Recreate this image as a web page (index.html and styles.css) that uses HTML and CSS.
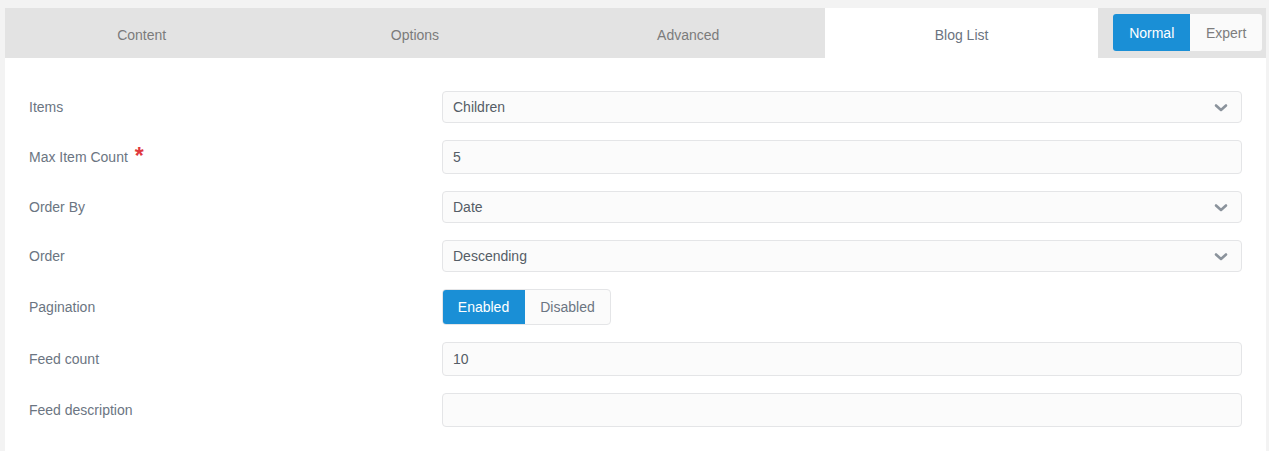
FILE: index.html
```html
<!DOCTYPE html>
<html>
<head>
<meta charset="utf-8">
<link rel="stylesheet" href="styles.css">
</head>
<body>
<div class="panel">
  <div class="tabbar">
    <div class="tab">Content</div>
    <div class="tab">Options</div>
    <div class="tab">Advanced</div>
    <div class="tab active">Blog List</div>
    <div class="mode">
      <div class="seg">
        <span class="seg-btn on">Normal</span>
        <span class="seg-btn">Expert</span>
      </div>
    </div>
  </div>
  <div class="form">
    <div class="row">
      <div class="label">Items</div>
      <div class="control select h32"><span>Children</span><svg class="chev" width="14" height="10" viewBox="0 0 14 10"><path d="M2 2.5 L7 7 L12 2.5" fill="none" stroke="#8b939c" stroke-width="2.6" stroke-linecap="round" stroke-linejoin="round"/></svg></div>
    </div>
    <div class="row">
      <div class="label">Max Item Count <span class="req">*</span></div>
      <div class="control input h34"><span>5</span></div>
    </div>
    <div class="row">
      <div class="label">Order By</div>
      <div class="control select h32"><span>Date</span><svg class="chev" width="14" height="10" viewBox="0 0 14 10"><path d="M2 2.5 L7 7 L12 2.5" fill="none" stroke="#8b939c" stroke-width="2.6" stroke-linecap="round" stroke-linejoin="round"/></svg></div>
    </div>
    <div class="row">
      <div class="label">Order</div>
      <div class="control select h32"><span>Descending</span><svg class="chev" width="14" height="10" viewBox="0 0 14 10"><path d="M2 2.5 L7 7 L12 2.5" fill="none" stroke="#8b939c" stroke-width="2.6" stroke-linecap="round" stroke-linejoin="round"/></svg></div>
    </div>
    <div class="row">
      <div class="label">Pagination</div>
      <div class="toggle">
        <span class="tg on">Enabled</span>
        <span class="tg">Disabled</span>
      </div>
    </div>
    <div class="row">
      <div class="label">Feed count</div>
      <div class="control input h34"><span>10</span></div>
    </div>
    <div class="row">
      <div class="label">Feed description</div>
      <div class="control input h34"><span></span></div>
    </div>
  </div>
</div>
</body>
</html>
```
FILE: styles.css
```css
html, body {
  margin: 0;
  padding: 0;
  background: #f3f3f3;
  font-family: "Liberation Sans", Arial, Helvetica, sans-serif;
  font-size: 14px;
}
.panel {
  margin: 8px 3px 0 5px;
  background: #ffffff;
  height: 443px;
  box-sizing: border-box;
}
.tabbar {
  display: flex;
  height: 50px;
  background: #e3e3e3;
}
.tab {
  width: 273.3px;
  display: flex;
  align-items: center;
  justify-content: center;
  color: #7b7b7b;
  font-size: 14px;
  padding-top: 3px;
  box-sizing: border-box;
}
.tab.active {
  background: #ffffff;
  color: #6b7480;
}
.mode {
  flex: 1;
  display: flex;
  align-items: flex-start;
  padding: 6px 0 0 15px;
}
.seg {
  display: flex;
  height: 37px;
  border-radius: 3px;
  overflow: hidden;
  background: #fafafa;
}
.seg-btn {
  display: flex;
  align-items: center;
  justify-content: center;
  color: #7d7d7d;
  font-size: 14px;
  width: 72px;
}
.seg-btn.on {
  background: #1a8fd6;
  color: #ffffff;
  width: 77px;
}
.form {
  padding: 33px 24px 0 24px;
}
.row {
  display: flex;
  align-items: center;
  margin-bottom: 17px;
}
.label {
  width: 413px;
  color: #6b7582;
  font-size: 14px;
  flex-shrink: 0;
  line-height: 16px;
}
.req {
  color: #e0393e;
  font-size: 23px;
  font-weight: bold;
  line-height: 0;
  position: relative;
  top: 2px;
  margin-left: 3px;
}
.control {
  flex: 1;
  box-sizing: border-box;
  border: 1px solid #e4e5e7;
  border-radius: 4px;
  background: #fbfbfb;
  display: flex;
  align-items: center;
  justify-content: space-between;
  padding: 0 13px 0 10px;
  color: #555d66;
  font-size: 14px;
}
.h32 { height: 32px; }
.h34 { height: 34px; }
.chev { display: block; margin-top: 1px; }
.toggle {
  display: flex;
  height: 36px;
  box-sizing: border-box;
  border: 1px solid #e4e5e7;
  border-radius: 4px;
  overflow: hidden;
  background: #fbfbfb;
}
.tg {
  display: flex;
  align-items: center;
  justify-content: center;
  width: 85px;
  color: #6b7582;
  font-size: 14px;
}
.tg.on {
  width: 83px;
  background: #1a8fd6;
  color: #ffffff;
  margin: -1px 0 -1px -1px;
}
```
